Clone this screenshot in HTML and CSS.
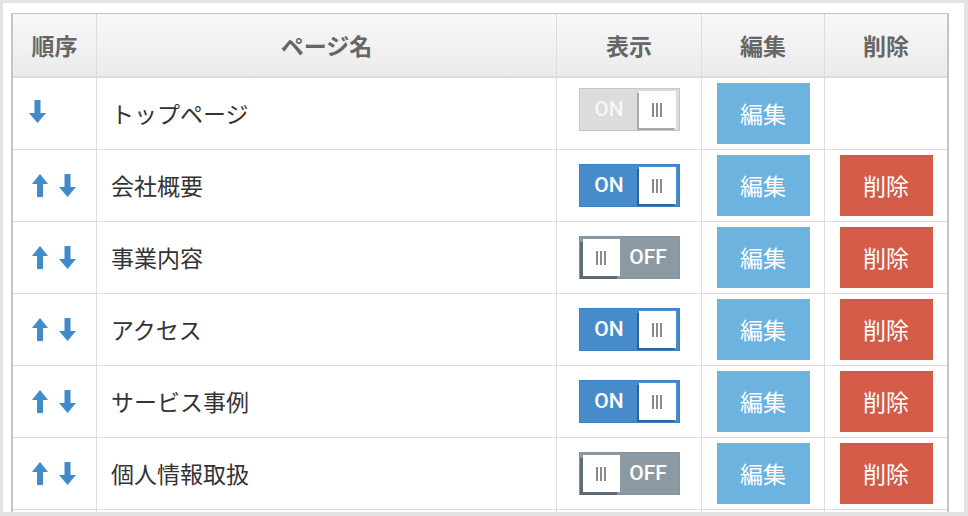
FILE: index.html
```html
<!DOCTYPE html>
<html lang="ja">
<head>
<meta charset="utf-8">
<title>ページ一覧</title>
<link rel="stylesheet" href="styles.css">
</head>
<body>
<div class="panel">
<table class="pages">
<thead>
<tr>
<th class="c-order">順序</th>
<th class="c-name">ページ名</th>
<th class="c-show">表示</th>
<th class="c-edit">編集</th>
<th class="c-del">削除</th>
</tr>
</thead>
<tbody>
<tr>
<td class="order"><svg class="arrow down first" viewBox="0 0 17 23"><path d="M5.5 0H11.5V13H17L8.5 23L0 13H5.5Z"/></svg></td>
<td class="name">トップページ</td>
<td class="show"><span class="toggle disabled"><span class="label">ON</span><span class="knob"><i></i><i></i><i></i></span></span></td>
<td class="edit"><a class="btn btn-edit">編集</a></td>
<td class="del"></td>
</tr>
<tr>
<td class="order"><svg class="arrow up" viewBox="0 0 16 23"><path d="M8 0L16 10H11V23H5V10H0Z"/></svg><svg class="arrow down" viewBox="0 0 17 23"><path d="M5.5 0H11.5V13H17L8.5 23L0 13H5.5Z"/></svg></td>
<td class="name">会社概要</td>
<td class="show"><span class="toggle on"><span class="label">ON</span><span class="knob"><i></i><i></i><i></i></span></span></td>
<td class="edit"><a class="btn btn-edit">編集</a></td>
<td class="del"><a class="btn btn-del">削除</a></td>
</tr>
<tr>
<td class="order"><svg class="arrow up" viewBox="0 0 16 23"><path d="M8 0L16 10H11V23H5V10H0Z"/></svg><svg class="arrow down" viewBox="0 0 17 23"><path d="M5.5 0H11.5V13H17L8.5 23L0 13H5.5Z"/></svg></td>
<td class="name">事業内容</td>
<td class="show"><span class="toggle off"><span class="knob"><i></i><i></i><i></i></span><span class="label">OFF</span></span></td>
<td class="edit"><a class="btn btn-edit">編集</a></td>
<td class="del"><a class="btn btn-del">削除</a></td>
</tr>
<tr>
<td class="order"><svg class="arrow up" viewBox="0 0 16 23"><path d="M8 0L16 10H11V23H5V10H0Z"/></svg><svg class="arrow down" viewBox="0 0 17 23"><path d="M5.5 0H11.5V13H17L8.5 23L0 13H5.5Z"/></svg></td>
<td class="name">アクセス</td>
<td class="show"><span class="toggle on"><span class="label">ON</span><span class="knob"><i></i><i></i><i></i></span></span></td>
<td class="edit"><a class="btn btn-edit">編集</a></td>
<td class="del"><a class="btn btn-del">削除</a></td>
</tr>
<tr>
<td class="order"><svg class="arrow up" viewBox="0 0 16 23"><path d="M8 0L16 10H11V23H5V10H0Z"/></svg><svg class="arrow down" viewBox="0 0 17 23"><path d="M5.5 0H11.5V13H17L8.5 23L0 13H5.5Z"/></svg></td>
<td class="name">サービス事例</td>
<td class="show"><span class="toggle on"><span class="label">ON</span><span class="knob"><i></i><i></i><i></i></span></span></td>
<td class="edit"><a class="btn btn-edit">編集</a></td>
<td class="del"><a class="btn btn-del">削除</a></td>
</tr>
<tr>
<td class="order"><svg class="arrow up" viewBox="0 0 16 23"><path d="M8 0L16 10H11V23H5V10H0Z"/></svg><svg class="arrow down" viewBox="0 0 17 23"><path d="M5.5 0H11.5V13H17L8.5 23L0 13H5.5Z"/></svg></td>
<td class="name">個人情報取扱</td>
<td class="show"><span class="toggle off"><span class="knob"><i></i><i></i><i></i></span><span class="label">OFF</span></span></td>
<td class="edit"><a class="btn btn-edit">編集</a></td>
<td class="del"><a class="btn btn-del">削除</a></td>
</tr>
<tr class="more">
<td class="order"></td>
<td class="name"></td>
<td class="show"></td>
<td class="edit"></td>
<td class="del"></td>
</tr>
</tbody>
</table>
</div>
</body>
</html>
```
FILE: styles.css
```css
html, body {
  margin: 0;
  padding: 0;
}
body {
  background: #e3e3e3;
  font-family: "Noto Sans CJK JP", "Noto Sans", sans-serif;
  color: #333;
}
.panel {
  margin: 3px 4px 0 3px;
  height: 509px;
  background: #fff;
  overflow: hidden;
  padding: 10px 15px 0 8px;
  box-sizing: border-box;
}
.pages {
  width: 938px;
  table-layout: fixed;
  border-collapse: separate;
  border-spacing: 0;
  border: 1px solid #c4c4c4;
  border-left-width: 2px;
  border-right-width: 2px;
}
.pages th,
.pages td {
  box-sizing: border-box;
  border-right: 1px solid #dddddd;
  border-bottom: 1px solid #dddddd;
  padding: 0;
}
.pages th:last-child,
.pages td:last-child {
  border-right: none;
}
.pages th {
  height: 64px;
  border-bottom: 2px solid #dcdcdc;
  background: linear-gradient(#f8f8f8, #ebebeb);
  color: #666;
  font-size: 23px;
  font-weight: 700;
  text-align: center;
  line-height: 1;
}
.c-order { width: 84px; }
.c-name { width: 460px; }
.c-show { width: 145px; }
.c-edit { width: 123px; }
.c-del { width: 122px; }

.pages td {
  height: 72px;
  padding: 5px 14px;
  vertical-align: middle;
}
.pages td.order {
  padding-left: 16px;
  padding-right: 0;
  font-size: 0;
}
.arrow {
  fill: #428bca;
  height: 23px;
  vertical-align: middle;
}
.arrow.up {
  width: 16px;
  margin-left: 3px;
}
.arrow.down {
  width: 17px;
  margin-left: 11px;
}
.arrow.down.first {
  margin-left: 0;
  margin-bottom: 4px;
}
.pages td.name {
  font-size: 23px;
  color: #333;
  line-height: 1;
}
.pages td.show {
  text-align: center;
  font-size: 0;
  padding: 0;
}
.toggle {
  display: inline-flex;
  align-items: flex-start;
  box-sizing: border-box;
  width: 101px;
  height: 43px;
  border: 1px solid;
  padding: 2px 3px 0 2px;
  vertical-align: middle;
  font-family: Roboto, "Liberation Sans", Arial, sans-serif;
  font-size: 21px;
  font-weight: 500;
  color: #fff;
}
.toggle .label {
  flex: 1;
  text-align: center;
  line-height: 37px;
}
.toggle .knob {
  display: flex;
  justify-content: center;
  align-items: center;
  gap: 2px;
  width: 37px;
  height: 37px;
  margin-left: 2px;
  background: #fff;
  box-shadow: -2px 2px 0 rgba(0, 0, 0, 0.35);
}
.toggle .knob i {
  display: block;
  width: 2px;
  height: 14px;
  background: #8a8a8a;
}
.toggle.on {
  background: #468bca;
  border-color: #3f82c2;
}
.toggle.on .knob {
  box-shadow: -2px 2px 0 #2e6598;
}
.toggle.off {
  background: #8b99a2;
  border-color: #85939c;
  padding: 2px 2px 0 3px;
}
.toggle.off .knob {
  margin-left: 0;
  box-shadow: -3px 3px 0 #5f6c75;
}
.toggle.disabled {
  background: #dcdcdc;
  border-color: #c8c8c8;
  color: #f6f6f6;
  margin-bottom: 8px;
}
.toggle.disabled .knob {
  box-shadow: -2px 2px 0 #a8a8a8;
}
.pages td.edit,
.pages td.del {
  padding: 5px 14px;
}
.btn {
  display: flex;
  align-items: center;
  justify-content: center;
  width: 93px;
  height: 61px;
  margin: 0 auto;
  color: #fff;
  font-size: 23px;
  line-height: 1;
  text-decoration: none;
}
.btn-edit {
  background: #6db3e0;
}
.btn-del {
  background: #d35b48;
}
```
